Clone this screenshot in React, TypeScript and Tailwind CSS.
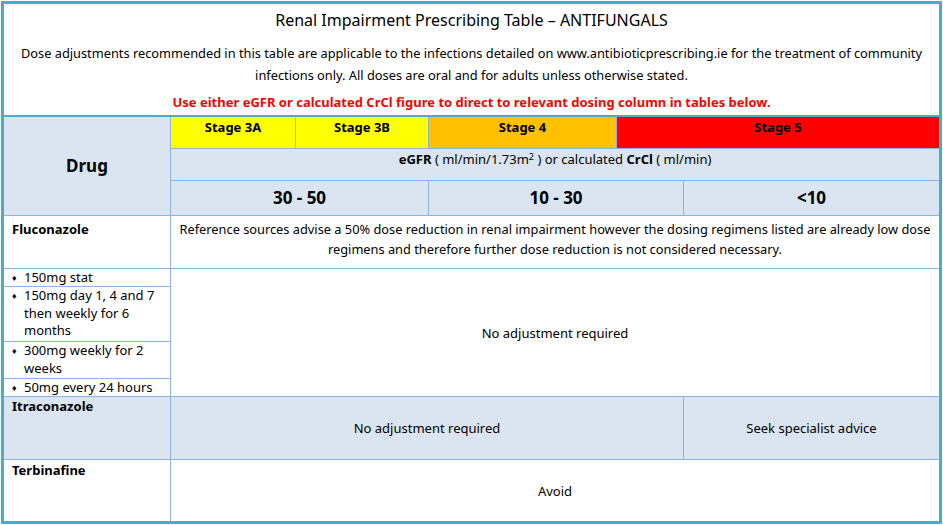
export default function App() {
  const cell = "bg-white";
  const blue = "bg-[#dbe5f1]";
  return (
    <div className="w-[943px] h-[525px] bg-white font-['Lato',sans-serif] text-[13px] text-black">
      <div className="m-[1px] border-[3px] border-[#4bacc6] h-[523px] w-[941px] flex flex-col">
        <div className="h-[111px] flex flex-col items-center text-center">
          <div className="text-[16px] mt-[4px]">Renal Impairment Prescribing Table – ANTIFUNGALS</div>
          <div className="mt-[10px] leading-[22px] px-2 whitespace-nowrap text-[12.8px]">
            Dose adjustments recommended in this table are applicable to the infections detailed on www.antibioticprescribing.ie for the treatment of community
            <br />infections only. All doses are oral and for adults unless otherwise stated.
          </div>
          <div className="mt-[7px] font-bold text-[#ff0000]">Use either eGFR or calculated CrCl figure to direct to relevant dosing column in tables below.</div>
        </div>
        <div className="grid flex-1 gap-px bg-[#8db3e2] border-t-2 border-[#4bacc6] grid-cols-[166px_124px_132px_187px_66px_1fr] grid-rows-[31px_31px_34px_52px_17px_54px_36px_17px_62px_1fr] leading-[18px]">
          <div className={`${blue} row-span-3 flex items-center justify-center font-bold text-[17px]`}>Drug</div>
          <div className="bg-[#ffff00] font-bold text-center pt-[1px]">Stage 3A</div>
          <div className="bg-[#ffff00] font-bold text-center pt-[1px]">Stage 3B</div>
          <div className="bg-[#ffc000] font-bold text-center pt-[1px]">Stage 4</div>
          <div className="bg-[#ff0000] font-bold text-center pt-[1px] col-span-2">Stage 5</div>
          <div className={`${blue} col-span-5 text-center pt-[1px]`}>
            <b>eGFR</b> ( ml/min/1.73m<sup className="leading-none text-[9px]">2</sup> ) or calculated <b>CrCl</b> ( ml/min)
          </div>
          <div className={`${blue} col-span-2 flex items-center justify-center font-bold text-[17px]`}>30 - 50</div>
          <div className={`${blue} col-span-2 flex items-center justify-center font-bold text-[17px]`}>10 - 30</div>
          <div className={`${blue} flex items-center justify-center font-bold text-[17px]`}>&lt;10</div>
          <div className={`${cell} font-bold px-2 pt-[4px]`}>Fluconazole</div>
          <div className={`${cell} col-span-5 text-center leading-[20px] pt-[3px] px-1 text-[12.8px]`}>
            Reference sources advise a 50% dose reduction in renal impairment however the dosing regimens listed are already low dose
            <br />regimens and therefore further dose reduction is not considered necessary.
          </div>
          {[
            "150mg stat",
            "150mg day 1, 4 and 7 then weekly for 6 months",
            "300mg weekly for 2 weeks",
            "50mg every 24 hours",
          ].map((t, i) => (
            <div key={t} className={`${cell} col-start-1 flex px-2 leading-[17.5px] overflow-hidden ${i === 0 ? "row-start-5" : ""}`}>
              <span className="text-[9px] w-[12px] shrink-0">♦</span>
              <span>{t}</span>
            </div>
          ))}
          <div className={`${cell} col-start-2 col-span-5 row-start-5 row-span-4 flex items-center justify-center`}>No adjustment required</div>
          <div className={`${blue} font-bold px-2`}>Itraconazole</div>
          <div className={`${blue} col-span-4 flex items-center justify-center`}>No adjustment required</div>
          <div className={`${blue} flex items-center justify-center`}>Seek specialist advice</div>
          <div className={`${cell} font-bold px-2 pt-[1px]`}>Terbinafine</div>
          <div className={`${cell} col-span-5 flex items-center justify-center`}>Avoid</div>
        </div>
      </div>
    </div>
  );
}
